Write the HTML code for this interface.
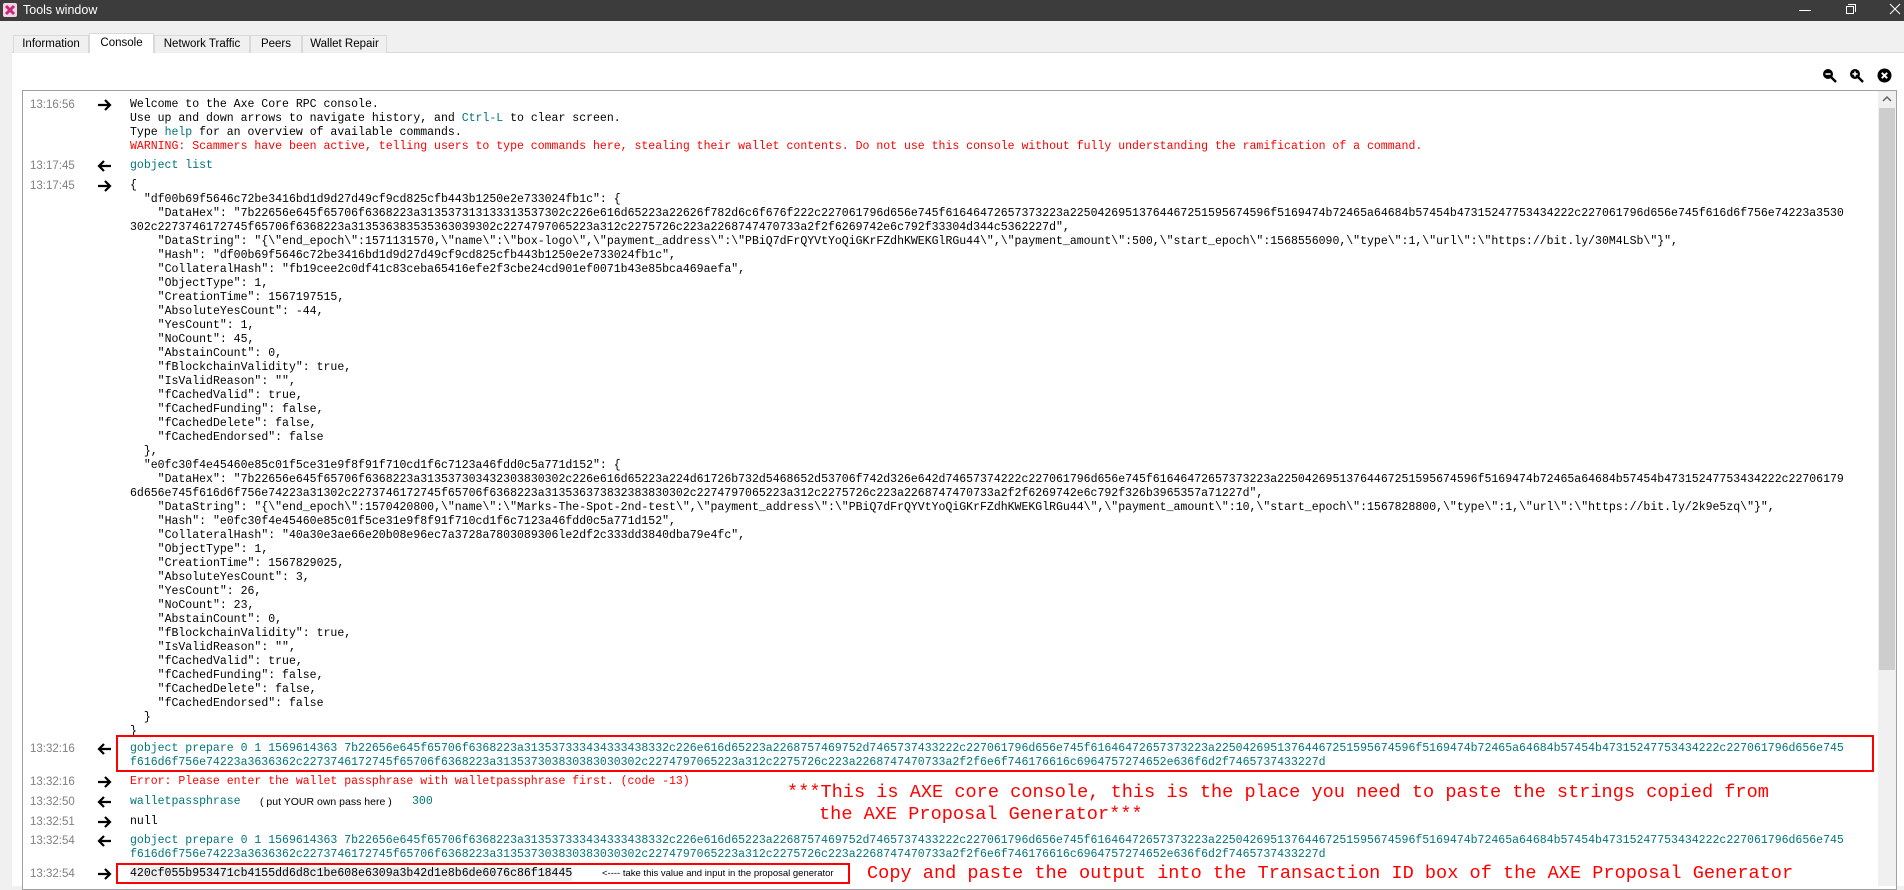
<!DOCTYPE html>
<html><head><meta charset="utf-8"><style>
*{margin:0;padding:0;box-sizing:border-box}
body{width:1904px;height:886px;overflow:hidden;background:#f0f0f0;font-family:"Liberation Sans",sans-serif;position:relative}
.title{position:absolute;left:0;top:0;width:1904px;height:21px;background:#3c3c3c;color:#fff;font-size:12.5px}
.tab{position:absolute;top:35px;height:18px;border:1px solid #d9d9d9;border-bottom:none;background:#f0f0f0;font-size:11.5px;text-align:center;line-height:16px;color:#000}
.panel{position:absolute;left:12px;top:52px;width:1892px;height:834px;background:#fff;border-top:1px solid #d9d9d9}
.box{position:absolute;left:22px;top:90px;width:1875px;height:800px;border:1px solid #a0a0a0;background:#fff}
.ts{position:absolute;left:30px;font-size:11.5px;color:#808080;line-height:14px}
.ar{position:absolute;left:97px;width:15px;height:12px}
pre{position:absolute;left:130px;width:1719px;font-family:"Liberation Mono",monospace;font-size:11.53px;line-height:14px;white-space:pre-wrap;word-break:break-all;color:#000}
.c{color:#00757a}.r{color:#ff0000}
.rb{position:absolute;border:2px solid #ff0000}
.ann{position:absolute;font-family:"Liberation Mono",monospace;font-size:18.6px;color:#ff0000;line-height:22px;white-space:pre}
</style></head><body>
<div class="title">
<svg style="position:absolute;left:3px;top:3px" width="14" height="14" viewBox="0 0 14 14"><rect width="14" height="14" rx="2" fill="#f3d6e6"/><path d="M3 3L11 11M11 3L3 11" stroke="#c8287a" stroke-width="3"/></svg>
<span style="position:absolute;left:23px;top:3px">Tools window</span>
<div style="position:absolute;left:1799px;top:10px;width:12px;height:1px;background:#fff"></div>
<div style="position:absolute;left:1846px;top:6px;width:8px;height:8px;border:1px solid #fff"></div>
<div style="position:absolute;left:1848px;top:4px;width:8px;height:8px;border-top:1px solid #fff;border-right:1px solid #fff"></div>
<svg style="position:absolute;left:1889px;top:3px" width="12" height="12"><path d="M1 1L11 11M11 1L1 11" stroke="#fff" stroke-width="1"/></svg>
</div>
<div class="panel"></div>
<div class="tab" style="left:13px;width:76px">Information</div>
<div class="tab" style="left:89px;width:65px;top:33px;height:20px;background:#fff;line-height:18px">Console</div>
<div class="tab" style="left:154px;width:96px">Network Traffic</div>
<div class="tab" style="left:250px;width:52px">Peers</div>
<div class="tab" style="left:302px;width:85px">Wallet Repair</div>
<svg style="position:absolute;left:1822px;top:68px" width="16" height="16" viewBox="0 0 16 16"><circle cx="6" cy="6" r="5" fill="#000"/><path d="M9 9L14 14" stroke="#000" stroke-width="2.5"/><rect x="3.5" y="5.2" width="5" height="1.6" fill="#fff"/></svg>
<svg style="position:absolute;left:1849px;top:68px" width="16" height="16" viewBox="0 0 16 16"><circle cx="6" cy="6" r="5" fill="#000"/><path d="M9 9L14 14" stroke="#000" stroke-width="2.5"/><rect x="3.5" y="5.2" width="5" height="1.6" fill="#fff"/><rect x="5.2" y="3.5" width="1.6" height="5" fill="#fff"/></svg>
<svg style="position:absolute;left:1877px;top:68px" width="15" height="15" viewBox="0 0 15 15"><circle cx="7.5" cy="7.5" r="7" fill="#000"/><path d="M4.8 4.8L10.2 10.2M10.2 4.8L4.8 10.2" stroke="#fff" stroke-width="2"/></svg>
<div class="box"></div>
<div style="position:absolute;left:1878px;top:91px;width:18px;height:795px;background:#f0f0f0"></div>
<div style="position:absolute;left:1879px;top:108px;width:16px;height:562px;background:#cdcdcd"></div>
<svg style="position:absolute;left:1882px;top:95px" width="10" height="8"><path d="M1 6L5 2L9 6" stroke="#606060" stroke-width="1.5" fill="none"/></svg>

<svg width="0" height="0" style="position:absolute"><defs>
<symbol id="R" viewBox="0 0 15 12"><path d="M1 6H13M8 1L13 6L8 11" stroke="#000" stroke-width="2.2" fill="none"/></symbol>
<symbol id="L" viewBox="0 0 15 12"><path d="M14 6H2M7 1L2 6L7 11" stroke="#000" stroke-width="2.2" fill="none"/></symbol>
</defs></svg>

<div class="ts" style="top:98px">13:16:56</div><svg class="ar" style="top:99px"><use href="#R"/></svg>
<pre style="top:98px">Welcome to the Axe Core RPC console.
Use up and down arrows to navigate history, and <span class="c">Ctrl-L</span> to clear screen.
Type <span class="c">help</span> for an overview of available commands.
<span class="r">WARNING: Scammers have been active, telling users to type commands here, stealing their wallet contents. Do not use this console without fully understanding the ramification of a command.</span></pre>

<div class="ts" style="top:159px">13:17:45</div><svg class="ar" style="top:160px"><use href="#L"/></svg>
<pre class="c" style="top:159px">gobject list</pre>

<div class="ts" style="top:179px">13:17:45</div><svg class="ar" style="top:180px"><use href="#R"/></svg>
<pre style="top:179px">{
  "df00b69f5646c72be3416bd1d9d27d49cf9cd825cfb443b1250e2e733024fb1c": {
    "DataHex": "7b22656e645f65706f6368223a313537313133313537302c226e616d65223a22626f782d6c6f676f222c227061796d656e745f61646472657373223a22504269513764467251595674596f5169474b72465a64684b57454b47315247753434222c227061796d656e745f616d6f756e74223a3530302c2273746172745f65706f6368223a313536383535363039302c2274797065223a312c2275726c223a2268747470733a2f2f6269742e6c792f33304d344c5362227d",
    "DataString": "{\"end_epoch\":1571131570,\"name\":\"box-logo\",\"payment_address\":\"PBiQ7dFrQYVtYoQiGKrFZdhKWEKGlRGu44\",\"payment_amount\":500,\"start_epoch\":1568556090,\"type\":1,\"url\":\"https://bit.ly/30M4LSb\"}",
    "Hash": "df00b69f5646c72be3416bd1d9d27d49cf9cd825cfb443b1250e2e733024fb1c",
    "CollateralHash": "fb19cee2c0df41c83ceba65416efe2f3cbe24cd901ef0071b43e85bca469aefa",
    "ObjectType": 1,
    "CreationTime": 1567197515,
    "AbsoluteYesCount": -44,
    "YesCount": 1,
    "NoCount": 45,
    "AbstainCount": 0,
    "fBlockchainValidity": true,
    "IsValidReason": "",
    "fCachedValid": true,
    "fCachedFunding": false,
    "fCachedDelete": false,
    "fCachedEndorsed": false
  },
  "e0fc30f4e45460e85c01f5ce31e9f8f91f710cd1f6c7123a46fdd0c5a771d152": {
    "DataHex": "7b22656e645f65706f6368223a313537303432303830302c226e616d65223a224d61726b732d5468652d53706f742d326e642d74657374222c227061796d656e745f61646472657373223a22504269513764467251595674596f5169474b72465a64684b57454b47315247753434222c227061796d656e745f616d6f756e74223a31302c2273746172745f65706f6368223a313536373832383830302c2274797065223a312c2275726c223a2268747470733a2f2f6269742e6c792f326b3965357a71227d",
    "DataString": "{\"end_epoch\":1570420800,\"name\":\"Marks-The-Spot-2nd-test\",\"payment_address\":\"PBiQ7dFrQYVtYoQiGKrFZdhKWEKGlRGu44\",\"payment_amount\":10,\"start_epoch\":1567828800,\"type\":1,\"url\":\"https://bit.ly/2k9e5zq\"}",
    "Hash": "e0fc30f4e45460e85c01f5ce31e9f8f91f710cd1f6c7123a46fdd0c5a771d152",
    "CollateralHash": "40a30e3ae66e20b08e96ec7a3728a7803089306le2df2c333dd3840dba79e4fc",
    "ObjectType": 1,
    "CreationTime": 1567829025,
    "AbsoluteYesCount": 3,
    "YesCount": 26,
    "NoCount": 23,
    "AbstainCount": 0,
    "fBlockchainValidity": true,
    "IsValidReason": "",
    "fCachedValid": true,
    "fCachedFunding": false,
    "fCachedDelete": false,
    "fCachedEndorsed": false
  }
}</pre>

<div class="ts" style="top:742px">13:32:16</div><svg class="ar" style="top:743px"><use href="#L"/></svg>
<pre class="c" style="top:742px">gobject prepare 0 1 1569614363 7b22656e645f65706f6368223a313537333434333438332c226e616d65223a2268757469752d7465737433222c227061796d656e745f61646472657373223a22504269513764467251595674596f5169474b72465a64684b57454b47315247753434222c227061796d656e745f616d6f756e74223a3636362c2273746172745f65706f6368223a313537303830383030302c2274797065223a312c2275726c223a2268747470733a2f2f6e6f746176616c6964757274652e636f6d2f7465737433227d</pre>
<div class="rb" style="left:116px;top:735px;width:1758px;height:37px"></div>

<div class="ts" style="top:775px">13:32:16</div><svg class="ar" style="top:776px"><use href="#R"/></svg>
<pre class="r" style="top:775px">Error: Please enter the wallet passphrase with walletpassphrase first. (code -13)</pre>

<div class="ts" style="top:795px">13:32:50</div><svg class="ar" style="top:796px"><use href="#L"/></svg>
<pre class="c" style="top:795px">walletpassphrase</pre>
<div style="position:absolute;left:260px;top:795px;font-size:10.5px;line-height:14px">( put YOUR own pass here )</div>
<pre class="c" style="top:795px;left:412px;width:60px">300</pre>

<div class="ts" style="top:815px">13:32:51</div><svg class="ar" style="top:816px"><use href="#R"/></svg>
<pre style="top:815px">null</pre>

<div class="ts" style="top:834px">13:32:54</div><svg class="ar" style="top:835px"><use href="#L"/></svg>
<pre class="c" style="top:834px">gobject prepare 0 1 1569614363 7b22656e645f65706f6368223a313537333434333438332c226e616d65223a2268757469752d7465737433222c227061796d656e745f61646472657373223a22504269513764467251595674596f5169474b72465a64684b57454b47315247753434222c227061796d656e745f616d6f756e74223a3636362c2273746172745f65706f6368223a313537303830383030302c2274797065223a312c2275726c223a2268747470733a2f2f6e6f746176616c6964757274652e636f6d2f7465737433227d</pre>

<div class="ts" style="top:867px">13:32:54</div><svg class="ar" style="top:868px"><use href="#R"/></svg>
<pre style="top:867px;width:auto;background:#eeeeee">420cf055b953471cb4155dd6d8c1be608e6309a3b42d1e8b6de6076c86f18445</pre>
<div style="position:absolute;left:602px;top:867px;font-size:9.5px;line-height:14px">&lt;---- take this value and input in the proposal generator</div>
<div class="rb" style="left:116px;top:863px;width:734px;height:21px"></div>

<div class="ann" style="left:787px;top:782px">***This is AXE core console, this is the place you need to paste the strings copied from</div>
<div class="ann" style="left:819px;top:804px">the AXE Proposal Generator***</div>
<div class="ann" style="left:867px;top:863px">Copy and paste the output into the Transaction ID box of the AXE Proposal Generator</div>
</body></html>
